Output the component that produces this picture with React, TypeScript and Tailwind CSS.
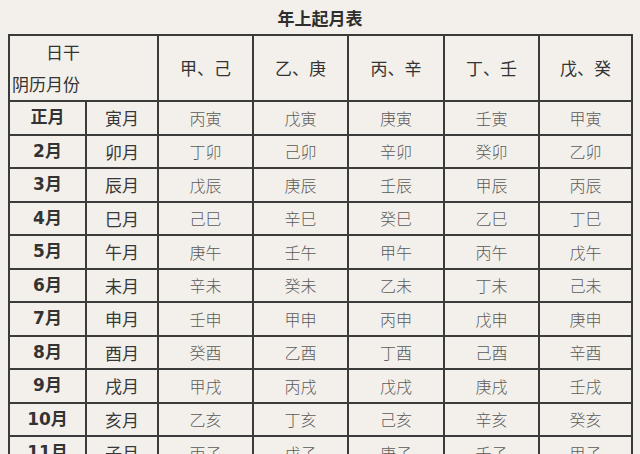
import React from "react";

const heads = ["甲、己", "乙、庚", "丙、辛", "丁、壬", "戊、癸"];
const rows: [string, string, string[]][] = [
  ["正月", "寅月", ["丙寅", "戊寅", "庚寅", "壬寅", "甲寅"]],
  ["2月", "卯月", ["丁卯", "己卯", "辛卯", "癸卯", "乙卯"]],
  ["3月", "辰月", ["戊辰", "庚辰", "壬辰", "甲辰", "丙辰"]],
  ["4月", "巳月", ["己巳", "辛巳", "癸巳", "乙巳", "丁巳"]],
  ["5月", "午月", ["庚午", "壬午", "甲午", "丙午", "戊午"]],
  ["6月", "未月", ["辛未", "癸未", "乙未", "丁未", "己未"]],
  ["7月", "申月", ["壬申", "甲申", "丙申", "戊申", "庚申"]],
  ["8月", "酉月", ["癸酉", "乙酉", "丁酉", "己酉", "辛酉"]],
  ["9月", "戌月", ["甲戌", "丙戌", "戊戌", "庚戌", "壬戌"]],
  ["10月", "亥月", ["乙亥", "丁亥", "己亥", "辛亥", "癸亥"]],
  ["11月", "子月", ["丙子", "戊子", "庚子", "壬子", "甲子"]],
];

const cjk = { fontFamily: '"Noto Sans CJK SC", sans-serif' };
const num = { fontFamily: '"DejaVu Sans", "Noto Sans CJK SC", sans-serif' };

export default function App() {
  return (
    <div className="w-[640px] h-[454px] overflow-hidden bg-[#f3f0eb]" style={cjk}>
      <div className="h-[34px] flex items-center justify-center pt-[1px] text-[17px] font-bold text-[#2e2e2e]">
        年上起月表
      </div>
      <table className="ml-[8px] w-[623px] table-fixed border-collapse">
        <colgroup>
          <col className="w-[77px]" />
          <col className="w-[72px]" />
          <col className="w-[95px]" />
          <col className="w-[95px]" />
          <col className="w-[96px]" />
          <col className="w-[95px]" />
          <col className="w-[93px]" />
        </colgroup>
        <thead>
          <tr className="h-[64px]">
            <th colSpan={2} className="border-2 border-[#3b3b3b] p-0 pl-[2px] text-left font-normal text-[17px] text-[#333] leading-[32px]">
              <div>　　日干</div>
              <div>阴历月份</div>
            </th>
            {heads.map((h) => (
              <th key={h} className="border-2 border-[#3b3b3b] p-0 text-center font-normal text-[17px] text-[#333]">
                {h}
              </th>
            ))}
          </tr>
        </thead>
        <tbody>
          {rows.map(([m, z, cells]) => (
            <tr key={m} className="h-[33.5px]">
              <td className="border-2 border-[#3b3b3b] p-0 text-center text-[17px] font-bold text-[#333]" style={num}>
                {m}
              </td>
              <td className="border-2 border-[#3b3b3b] p-0 text-center text-[17px] font-normal text-[#383838]">
                {z}
              </td>
              {cells.map((c, i) => (
                <td key={i} className="border-2 border-[#3b3b3b] p-0 text-center text-[16px] font-light text-[#5a5a5a]">
                  {c}
                </td>
              ))}
            </tr>
          ))}
        </tbody>
      </table>
    </div>
  );
}
